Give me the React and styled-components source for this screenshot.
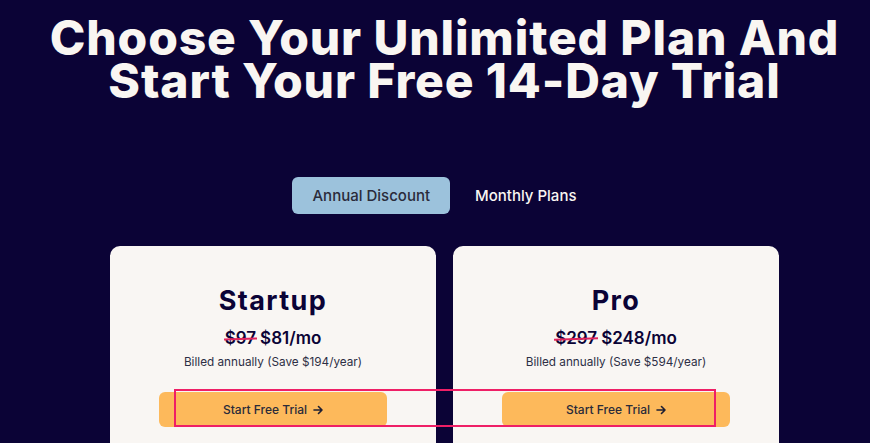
import React, { useState } from 'react';
import styled, { createGlobalStyle } from 'styled-components';

const GlobalStyle = createGlobalStyle`
  html, body {
    margin: 0;
    padding: 0;
    background: #0b0336;
    overflow: hidden;
  }
  body {
    font-family: Inter, "Liberation Sans", sans-serif;
  }
`;

const Page = styled.div`
  position: relative;
  width: 870px;
  height: 443px;
  box-sizing: border-box;
  padding: 16px 0 0 19px;
  display: flex;
  flex-direction: column;
  align-items: center;
  background: #0b0336;
  overflow: hidden;
`;

const Title = styled.h1`
  margin: 0;
  font-family: Inter, "Liberation Sans", sans-serif;
  font-weight: 800;
  font-size: 48px;
  line-height: 43px;
  letter-spacing: 0.85px;
  color: #f9f6f2;
  text-align: center;
  white-space: nowrap;
`;

const Tabs = styled.div`
  display: flex;
  gap: 5px;
  margin-top: 75px;
`;

const Tab = styled.button`
  border: none;
  border-radius: 6px;
  height: 37px;
  padding: 0 20px;
  font-family: Inter, "Liberation Sans", sans-serif;
  font-size: 15px;
  font-weight: 500;
  cursor: pointer;
  background: ${(p) => (p.active ? '#9cc2dc' : 'transparent')};
  color: ${(p) => (p.active ? '#2a2b3a' : '#f9f6f2')};
`;

const Cards = styled.div`
  display: flex;
  gap: 17px;
  margin-top: 32px;
`;

const Card = styled.div`
  width: 326px;
  height: 260px;
  background: #f9f6f3;
  border-radius: 10px;
  display: flex;
  flex-direction: column;
  align-items: center;
  padding-top: 39px;
  box-sizing: border-box;
`;

const PlanName = styled.h2`
  margin: 0;
  font-size: 27px;
  font-weight: 700;
  line-height: 32px;
  letter-spacing: 1.4px;
  color: #0b0336;
`;

const Price = styled.div`
  margin-top: 10px;
  font-size: 17px;
  font-weight: 600;
  line-height: 22px;
  color: #0b0336;
  display: flex;
  gap: 4px;
`;

const OldPrice = styled.span`
  position: relative;
  &::after {
    content: '';
    position: absolute;
    left: -1px;
    right: -1px;
    top: 52%;
    height: 2px;
    background: #e0245e;
    transform: rotate(-2deg);
  }
`;

const Billed = styled.div`
  margin-top: 6px;
  font-size: 11.75px;
  line-height: 14px;
  color: #2d2f45;
`;

const TrialButton = styled.button`
  margin-top: 23px;
  width: 228px;
  height: 35px;
  border: none;
  border-radius: 6px;
  background: #fdb95b;
  color: #2a2b3a;
  font-family: Inter, "Liberation Sans", sans-serif;
  font-size: 12px;
  font-weight: 500;
  cursor: pointer;
  display: flex;
  align-items: center;
  justify-content: center;
  gap: 6px;
`;

const Highlight = styled.div`
  position: absolute;
  left: 174px;
  top: 389px;
  width: 542px;
  height: 38px;
  border: 2px solid #ef1f66;
  box-sizing: border-box;
  pointer-events: none;
`;

const Arrow = () => (
  <svg width="10" height="10" viewBox="0 0 10 10" fill="none" stroke="#1e1f33" strokeWidth="1.6" strokeLinecap="round" strokeLinejoin="round">
    <path d="M1 5h8M5.5 1.5 9 5l-3.5 3.5" />
  </svg>
);

const plans = [
  { name: 'Startup', old: '$97', price: '$81/mo', save: '$194' },
  { name: 'Pro', old: '$297', price: '$248/mo', save: '$594' },
];

const App = () => {
  const [tab, setTab] = useState('annual');
  return (
    <Page>
      <GlobalStyle />
      <Title>
        Choose Your Unlimited Plan And
        <br />
        Start Your Free 14-Day Trial
      </Title>
      <Tabs>
        <Tab active={tab === 'annual'} onClick={() => setTab('annual')}>Annual Discount</Tab>
        <Tab active={tab === 'monthly'} onClick={() => setTab('monthly')}>Monthly Plans</Tab>
      </Tabs>
      <Cards>
        {plans.map((p) => (
          <Card key={p.name}>
            <PlanName>{p.name}</PlanName>
            <Price>
              <OldPrice>{p.old}</OldPrice>
              <span>{p.price}</span>
            </Price>
            <Billed>Billed annually (Save {p.save}/year)</Billed>
            <TrialButton>
              Start Free Trial <Arrow />
            </TrialButton>
          </Card>
        ))}
      </Cards>
      <Highlight />
    </Page>
  );
};

export default App;
